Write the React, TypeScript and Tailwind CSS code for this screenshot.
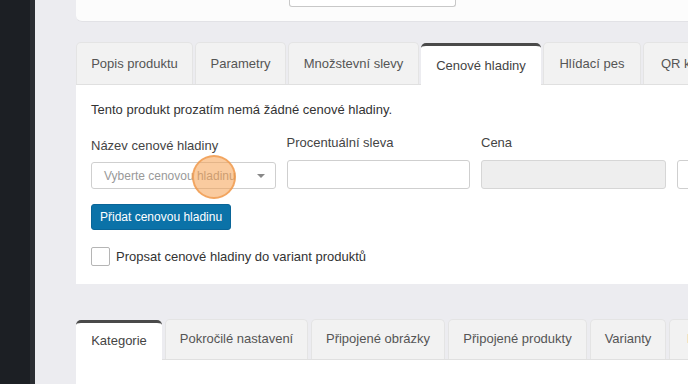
import React from 'react';

type Tab = { label: string; w: string };

const topTabs: Tab[] = [
  { label: 'Popis produktu', w: 'w-[117px]' },
  { label: 'Parametry', w: 'w-[91px]' },
  { label: 'Množstevní slevy', w: 'w-[131px]' },
  { label: 'Cenové hladiny', w: 'w-[120px]' },
  { label: 'Hlídací pes', w: 'w-[98px]' },
  { label: 'QR kód', w: 'w-[80px]' },
];

const bottomTabs: Tab[] = [
  { label: 'Kategorie', w: 'w-[86px]' },
  { label: 'Pokročilé nastavení', w: 'w-[143px]' },
  { label: 'Připojené obrázky', w: 'w-[134px]' },
  { label: 'Připojené produkty', w: 'w-[139px]' },
  { label: 'Varianty', w: 'w-[76px]' },
  { label: 'Kupóny', w: 'w-[80px]' },
];

const Tabs: React.FC<{ items: Tab[]; active: number; h: string; gap: string }> = ({ items, active, h, gap }) => (
  <div className={`flex ${gap} whitespace-nowrap`}>
    {items.map((t, i) =>
      i === active ? (
        <div
          key={t.label}
          className={`${h} ${t.w} shrink-0 flex items-center justify-center bg-white border-t-[3px] border-[#4a4a4a] rounded-t-[5px] text-[#444] relative top-px`}
        >
          {t.label}
        </div>
      ) : (
        <div
          key={t.label}
          className={`${h} ${t.w} shrink-0 flex items-center justify-center bg-[#f2f2f2] border border-b-0 border-[#e4e4e4] rounded-t-[5px] text-[#555]`}
        >
          {t.label}
        </div>
      )
    )}
  </div>
);

export default function App() {
  return (
    <div className="flex h-[384px] w-[688px] overflow-hidden text-[13px] font-['Liberation_Sans',Arial,sans-serif]">
      <div className="w-[30px] bg-[#1c1f24] shrink-0" />
      <div className="w-[5px] bg-[#2a2d32] shrink-0" />
      <main className="flex-1 bg-[#ececf0] pl-[41px] overflow-hidden">
        {/* top card, scrolled mostly out of view */}
        <div className="w-[800px] h-[22px] bg-[#fcfcfc] rounded-b-[6px] border-b border-[#e2e2e6] pl-[213px]">
          <div className="w-[167px] h-[7px] border border-t-0 border-[#c8c8c8] rounded-b-[3px] bg-white" />
        </div>

        {/* price levels */}
        <section className="mt-[20px] w-[800px]">
          <Tabs items={topTabs} active={3} h="h-[42px]" gap="gap-[2px]" />
          <div className="bg-white border-t border-[#e0e0e0] px-[15px] pt-[16px] pb-[17px] text-[#333]">
            <p className="leading-[18px]">Tento produkt prozatím nemá žádné cenové hladiny.</p>

            <div className="flex gap-[11px] mt-[15px]">
              <div className="w-[185px] pt-[3px] relative">
                <div className="leading-[18px] text-[#444]">Název cenové hladiny</div>
                <div className="mt-[7px] h-[27px] border border-[#cfcfcf] rounded-[3px] flex items-center justify-between pl-[12px] pr-[10px] text-[#999] text-[12px]">
                  <span>Vyberte cenovou hladinu</span>
                  <span className="w-0 h-0 border-l-[4px] border-r-[4px] border-t-[4px] border-l-transparent border-r-transparent border-t-[#888]" />
                </div>
                <div className="absolute left-[101px] top-[21px] w-[44px] h-[44px] rounded-full bg-[rgba(245,160,80,0.55)] border-2 border-[rgba(240,150,70,0.7)]" />
              </div>
              <div className="w-[184px]">
                <div className="leading-[18px] text-[#444]">Procentuální sleva</div>
                <div className="mt-[8px] h-[29px] border border-[#cfcfcf] rounded-[3px] bg-white" />
              </div>
              <div className="w-[185px]">
                <div className="leading-[18px] text-[#444]">Cena</div>
                <div className="mt-[8px] h-[29px] border border-[#d6d6d6] rounded-[3px] bg-[#eeeeee]" />
              </div>
              <div className="w-[185px]">
                <div className="leading-[18px] text-[#444]">&nbsp;</div>
                <div className="mt-[8px] h-[29px] border border-[#cfcfcf] rounded-[3px] bg-white" />
              </div>
            </div>

            <button className="mt-[15px] h-[26px] px-[8px] bg-[#0b72a8] text-white text-[12px] rounded-[3px] border border-[#0a6598]">
              Přidat cenovou hladinu
            </button>

            <label className="mt-[17px] flex items-center gap-[6px] text-[#333]">
              <span className="w-[19px] h-[19px] border border-[#b5b5b5] rounded-[2px] bg-white" />
              <span>Propsat cenové hladiny do variant produktů</span>
            </label>
          </div>
        </section>

        {/* categories */}
        <section className="mt-[35px] w-[800px]">
          <Tabs items={bottomTabs} active={0} h="h-[40px]" gap="gap-[3px]" />
          <div className="bg-white border-t border-[#e0e0e0] h-[40px] pt-[20px] pl-[474px] text-[#333] whitespace-nowrap">
            Produkt je zařazen v 1 kategorii
          </div>
        </section>
      </main>
    </div>
  );
}
